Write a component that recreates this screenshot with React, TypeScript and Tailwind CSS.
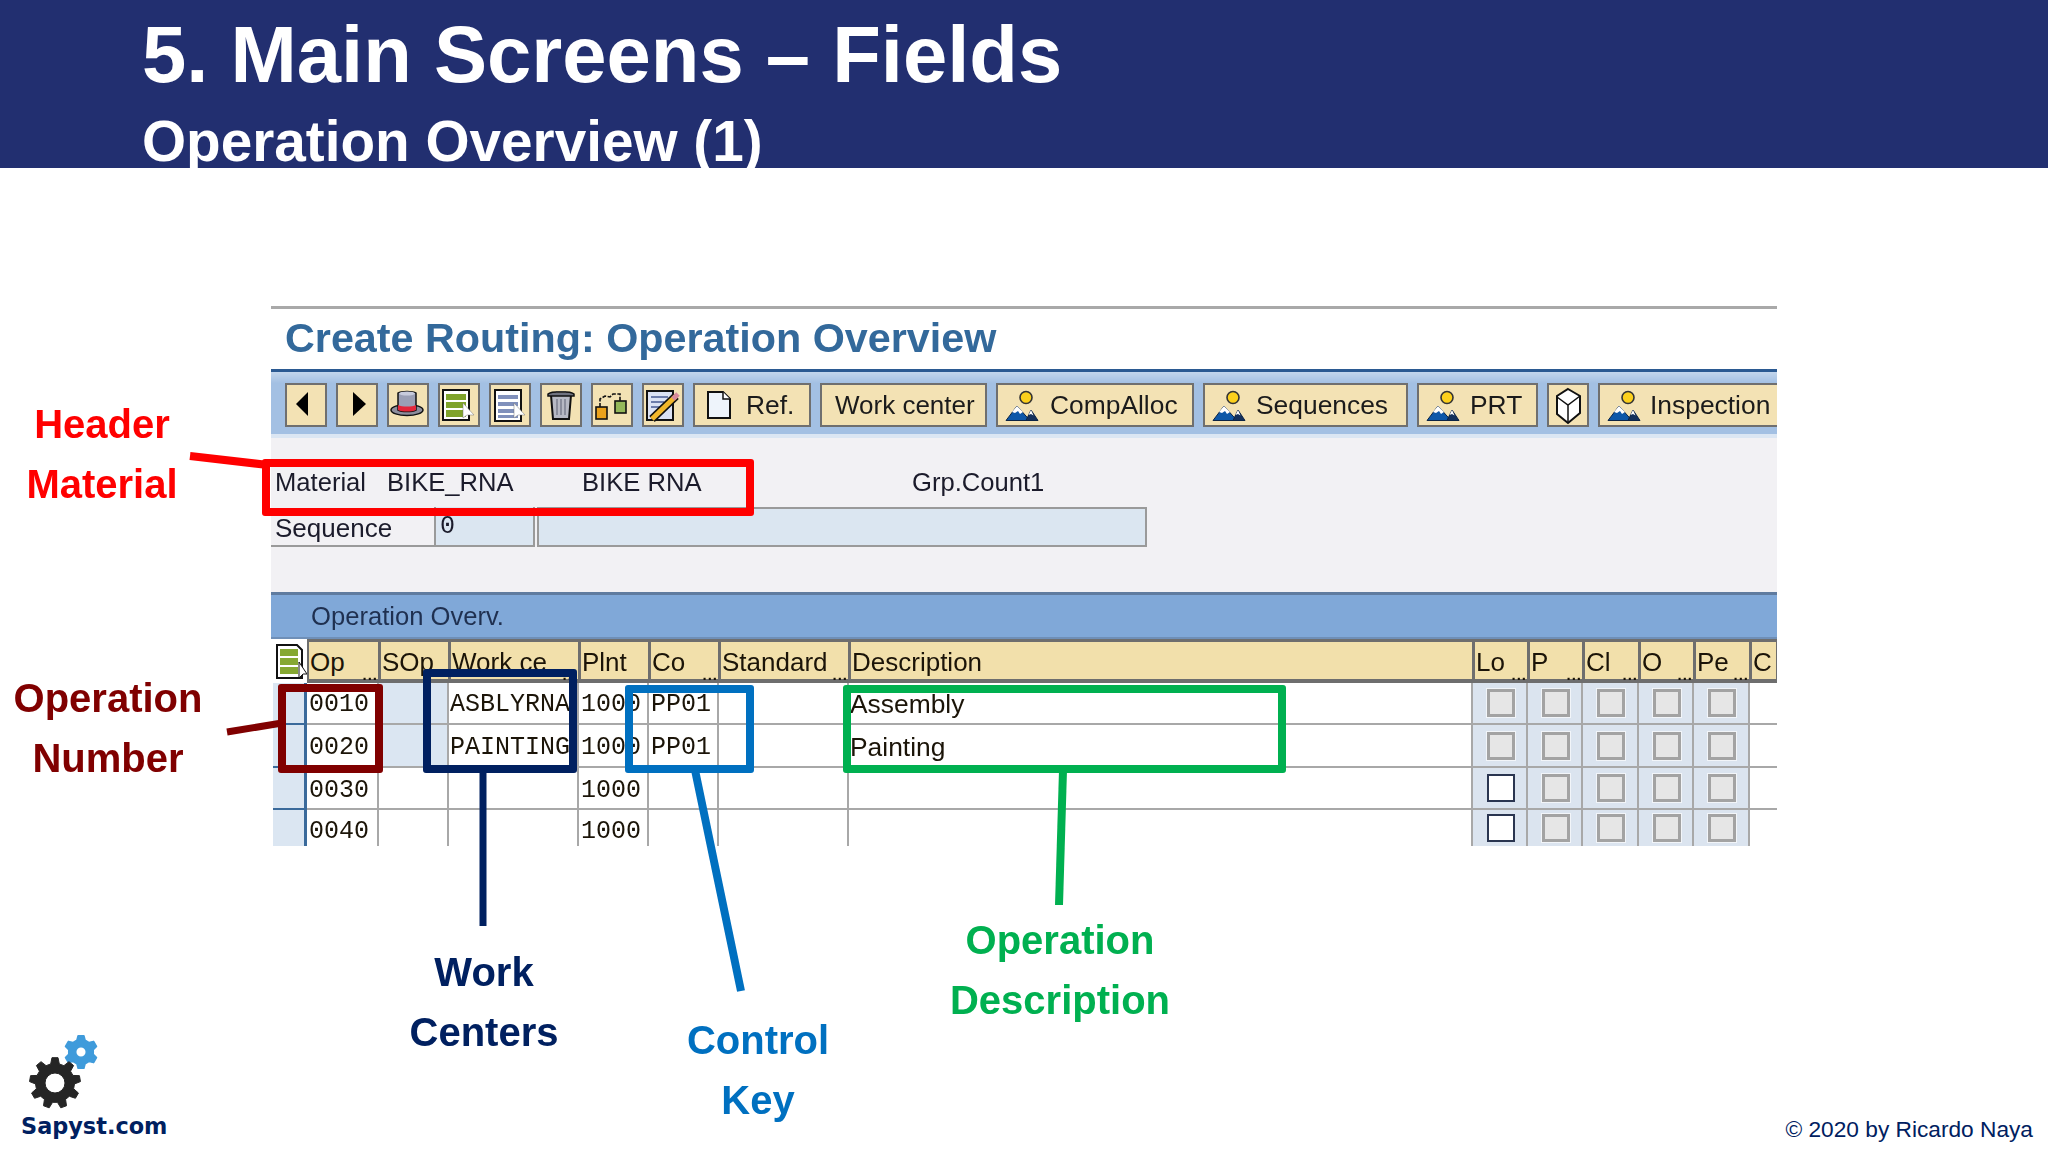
import type { ReactNode } from 'react'

const TABLE_COLS =
  'grid-cols-[36px_72px_70px_130px_70px_70px_130px_624px_55px_55px_56px_55px_56px_27px]'

function gearPath(cx: number, cy: number, outer: number, root: number, hole: number, teeth: number) {
  const pts: string[] = []
  const step = (Math.PI * 2) / teeth
  for (let i = 0; i < teeth; i++) {
    const a = i * step - Math.PI / 2
    const corners: [number, number][] = [
      [root, a - step * 0.32],
      [outer, a - step * 0.17],
      [outer, a + step * 0.17],
      [root, a + step * 0.32],
    ]
    corners.forEach(([r, t]) => {
      pts.push(`${(cx + r * Math.cos(t)).toFixed(2)} ${(cy + r * Math.sin(t)).toFixed(2)}`)
    })
  }
  const ring = `M${cx - hole} ${cy}a${hole} ${hole} 0 1 0 ${hole * 2} 0a${hole} ${hole} 0 1 0 ${-hole * 2} 0Z`
  return `M${pts.join('L')}Z${ring}`
}

function Logo() {
  return (
    <div className="flex flex-col items-start">
      <svg className="ml-px" width="90" height="78" viewBox="0 0 90 78">
        <path
          d={gearPath(59, 19, 16.5, 12.5, 5.3, 6)}
          fill="#3f9bdb"
          fillRule="evenodd"
          stroke="#3f9bdb"
          strokeWidth="1.5"
          strokeLinejoin="round"
        />
        <path
          d={gearPath(33, 50, 25.5, 19.5, 10, 9)}
          fill="#252525"
          fillRule="evenodd"
          stroke="#252525"
          strokeWidth="1"
          strokeLinejoin="round"
        />
      </svg>
      <span className="mt-px font-['DejaVu_Sans',sans-serif] text-[22.4px] leading-[28px] font-bold text-[#002060]">
        Sapyst.com
      </span>
    </div>
  )
}

function IconSvg({ children, w = 38, h = 40 }: { children: ReactNode; w?: number; h?: number }) {
  return (
    <svg className="shrink-0" width={w} height={h} viewBox={`0 0 ${w} ${h}`}>
      {children}
    </svg>
  )
}

const BackIcon = () => (
  <IconSvg>
    <polygon points="9,19 21,7 21,31" fill="#000" />
  </IconSvg>
)

const ForwardIcon = () => (
  <IconSvg>
    <polygon points="15,7 28,19 15,31" fill="#000" />
  </IconSvg>
)

const HatIcon = () => (
  <IconSvg>
    <ellipse cx="18" cy="25" rx="16" ry="5.5" fill="#8d8d9c" stroke="#111" strokeWidth="1.5" />
    <path d="M9 8c3-2 15-2 18 0v17c-4 2-14 2-18 0Z" fill="#9a9fb5" stroke="#111" strokeWidth="1.5" />
    <ellipse cx="18" cy="8.5" rx="8" ry="2" fill="#c7cbdc" />
    <path d="M9 20c4 2 14 2 18 0v5c-4 2-14 2-18 0Z" fill="#e3263a" />
  </IconSvg>
)

const Pointer = () => <polygon points="23,18 23,33 27,30 34,30" fill="#fff" stroke="#777" strokeWidth="0.5" />

const GreenListIcon = () => (
  <IconSvg>
    <rect x="3" y="5" width="26" height="30" fill="#fff" stroke="#111" strokeWidth="2" />
    <rect x="6" y="9" width="20" height="6" fill="#7fa32b" />
    <rect x="6" y="17" width="20" height="6" fill="#7fa32b" />
    <rect x="6" y="25" width="20" height="7" fill="#7fa32b" />
    <Pointer />
  </IconSvg>
)

const BlueListIcon = () => (
  <IconSvg>
    <rect x="4" y="5" width="26" height="31" fill="#fff" stroke="#111" strokeWidth="2" />
    <rect x="7" y="10" width="20" height="4" fill="#8090bb" />
    <rect x="7" y="17" width="20" height="4" fill="#8090bb" />
    <rect x="7" y="24" width="20" height="4" fill="#8090bb" />
    <rect x="7" y="30" width="20" height="3" fill="#8090bb" />
    <Pointer />
  </IconSvg>
)

const TrashIcon = () => (
  <IconSvg>
    <path d="M9 10h20l-2 24H11Z" fill="#b7b9c4" stroke="#111" strokeWidth="2" />
    <path d="M6 9c3-3 23-3 26 0v2H6Z" fill="#6f7280" stroke="#111" strokeWidth="1.5" />
    <rect x="14" y="6" width="10" height="2" fill="#333" />
    <path d="M15 14v16M19 14v16M23 14v16" stroke="#7c7f8e" strokeWidth="1.5" />
  </IconSvg>
)

const HierarchyIcon = () => (
  <IconSvg>
    <path d="M7 22v-8l5-3 5 1 3-3h7v7" fill="none" stroke="#111" strokeWidth="1.6" strokeDasharray="4 1.5" />
    <rect x="3" y="22" width="11" height="12" fill="#eba21c" stroke="#111" strokeWidth="1.6" />
    <rect x="22" y="16" width="11" height="12" fill="#94b85a" stroke="#111" strokeWidth="1.6" />
  </IconSvg>
)

const NoteIcon = () => (
  <IconSvg>
    <rect x="3" y="6" width="26" height="29" fill="#dbe2f4" stroke="#111" strokeWidth="2" />
    <path d="M7 12h17M7 17h13M7 22h9" stroke="#6c7cab" strokeWidth="2" />
    <path d="M8 34 32 11" stroke="#111" strokeWidth="8" />
    <path d="M8 34 32 11" stroke="#f2b72c" strokeWidth="5" />
    <path d="M29 14 34 9" stroke="#d88a9a" strokeWidth="5" />
  </IconSvg>
)

const PageIcon = () => (
  <IconSvg w={24} h={28}>
    <path d="M1 1h15l7 7v19H1Z" fill="#eef4fb" stroke="#111" strokeWidth="2" />
    <path d="M16 1v7h7" fill="#fff" stroke="#111" strokeWidth="1.5" />
  </IconSvg>
)

const PersonIcon = () => (
  <IconSvg w={34} h={31}>
    <circle cx="21" cy="7.5" r="6" fill="#fcd01c" stroke="#333" strokeWidth="1.6" />
    <polygon points="1,30.5 12,16 25,30.5" fill="#0d57a8" stroke="#0b2344" strokeWidth="1" />
    <polygon points="12,16 7,22 10,23 13,21 15,24 18,22" fill="#fff" />
    <polygon points="21,30.5 26,20 33,30.5" fill="#12305c" stroke="#0b2344" strokeWidth="1" />
    <polygon points="26,20 23.5,25 26,24 28.5,25.5" fill="#fff" />
  </IconSvg>
)

const CubeIcon = () => (
  <IconSvg>
    <path d="M19 4 31 11v17l-12 10-11-9V11Z" fill="#fff" stroke="#111" strokeWidth="2" />
    <path d="M8 12 19 20 31 11M19 20v17" fill="none" stroke="#111" strokeWidth="1.5" />
  </IconSvg>
)

function ToolButton({ className, children }: { className: string; children: ReactNode }) {
  return (
    <div
      className={`flex h-[44px] shrink-0 items-center overflow-hidden border-2 border-[#6f6f6f] bg-[#f3e2b4] text-[26.4px] leading-[32px] text-[#1b1b1b] ${className}`}
    >
      {children}
    </div>
  )
}

function Toolbar() {
  const plain = [
    <BackIcon key="back" />,
    <ForwardIcon key="forward" />,
    <HatIcon key="hat" />,
    <GreenListIcon key="green" />,
    <BlueListIcon key="blue" />,
    <TrashIcon key="trash" />,
    <HierarchyIcon key="hierarchy" />,
    <NoteIcon key="note" />,
  ]
  return (
    <div className="flex h-[62px] gap-[9px] overflow-hidden bg-linear-to-b from-[#c3d6ec] to-[#a3c0e3] to-[18%] pt-[11px] pl-[14px]">
      {plain.map((icon, i) => (
        <ToolButton key={i} className="w-[42px] justify-center">
          {icon}
        </ToolButton>
      ))}
      <ToolButton className="w-[118px] pl-[12px]">
        <PageIcon />
        <span className="ml-[15px]">Ref.</span>
      </ToolButton>
      <ToolButton className="w-[167px] pl-[13px] text-[26px]">Work center</ToolButton>
      <ToolButton className="w-[198px] pl-[7px]">
        <PersonIcon />
        <span className="ml-[11px]">CompAlloc</span>
      </ToolButton>
      <ToolButton className="w-[205px] pl-[7px]">
        <PersonIcon />
        <span className="ml-[10px]">Sequences</span>
      </ToolButton>
      <ToolButton className="w-[121px] pl-[7px]">
        <PersonIcon />
        <span className="ml-[10px]">PRT</span>
      </ToolButton>
      <ToolButton className="w-[42px] justify-center">
        <CubeIcon />
      </ToolButton>
      <ToolButton className="w-[190px] pl-[7px]">
        <PersonIcon />
        <span className="ml-[9px]">Inspection</span>
      </ToolButton>
    </div>
  )
}

function HeaderFields() {
  return (
    <div className="flex h-[154px] flex-col bg-[#f2f1f4] text-[#1b1b2b]">
      <div className="flex h-[69px] items-end pb-[10px] pl-[4px] text-[25.6px] leading-[30px]">
        <span className="w-[112px]">Material</span>
        <span className="w-[195px]">BIKE_RNA</span>
        <span className="w-[330px]">BIKE RNA</span>
        <span>Grp.Count1</span>
      </div>
      <div className="flex h-[40px] text-[26px]">
        <span className="w-[163px] border-b-2 border-[#9a9a9a] pt-[4px] pl-[4px] leading-[34px]">Sequence</span>
        <span className="w-[101px] border-2 border-t-0 border-[#9a9a9a] bg-[#dbe6f1] pt-[6px] pl-[4px] font-['Liberation_Mono',monospace] text-[25px] leading-[28px]">
          0
        </span>
        <span className="ml-[2px] w-[610px] border-2 border-[#9a9a9a] bg-[#dbe6f1]" />
      </div>
    </div>
  )
}

const headerCells = [
  { label: 'Op', more: true },
  { label: 'SOp', more: false },
  { label: 'Work ce', more: true },
  { label: 'Plnt', more: false },
  { label: 'Co', more: true },
  { label: 'Standard', more: true },
  { label: 'Description', more: false },
  { label: 'Lo', more: true },
  { label: 'P', more: true },
  { label: 'Cl', more: true },
  { label: 'O', more: true },
  { label: 'Pe', more: true },
  { label: 'C', more: false },
]

function TableCornerIcon() {
  return (
    <svg width="32" height="36" viewBox="0 0 32 36">
      <path d="M2 1h20l5 5v28H2Z" fill="#fff" stroke="#111" strokeWidth="2" />
      <rect x="5" y="5" width="18" height="7" fill="#86a832" />
      <rect x="5" y="14" width="18" height="7" fill="#86a832" />
      <rect x="5" y="23" width="18" height="7" fill="#86a832" />
      <polygon points="24,18 24,34 28,30 32,30" fill="#fff" stroke="#111" strokeWidth="1" />
    </svg>
  )
}

function TableHeader() {
  return (
    <div className={`grid h-[44px] ${TABLE_COLS} bg-[#6e6e6e]`}>
      <div className="flex justify-center bg-white pt-[5px] pl-[3px]">
        <TableCornerIcon />
      </div>
      {headerCells.map((cell) => (
        <div
          key={cell.label}
          className="relative mt-[3px] mr-px mb-[5px] ml-[2px] bg-[#f2e0ab] pt-[3px] pl-px text-[26px] leading-[34px] whitespace-nowrap text-[#1b1408]"
        >
          {cell.label}
          {cell.more && (
            <span className="absolute right-0 bottom-[-3px] text-[15px] leading-[14px] font-bold tracking-[1px]">
              ...
            </span>
          )}
        </div>
      ))}
    </div>
  )
}

function CheckBox({ active }: { active: boolean }) {
  return active ? (
    <span className="h-[28px] w-[28px] border-2 border-[#2a3550] bg-white" />
  ) : (
    <span className="h-[28px] w-[28px] border-[3px] border-[#a3a3a3] bg-[#e6e6e6] outline-1 outline-[#f2f5f9]" />
  )
}

const rows = [
  { op: '0010', wc: 'ASBLYRNA', plant: '1000', key: 'PP01', desc: 'Assembly', filled: true, height: 'h-[42px]', pad: 'pt-[4px]' },
  { op: '0020', wc: 'PAINTING', plant: '1000', key: 'PP01', desc: 'Painting', filled: true, height: 'h-[43px]', pad: 'pt-[4px]' },
  { op: '0030', wc: '', plant: '1000', key: '', desc: '', filled: false, height: 'h-[42px]', pad: 'pt-[5px]' },
  { op: '0040', wc: '', plant: '1000', key: '', desc: '', filled: false, height: 'h-[36px]', pad: 'pt-[8px]' },
]

function TableRow({ row, last }: { row: (typeof rows)[number]; last: boolean }) {
  const line = last ? '' : 'border-b-2 border-[#a8a8a8]'
  const cell = `flex items-center overflow-hidden border-r-2 border-r-[#a8a8a8] ${line}`
  const mono = `${row.pad} font-['Liberation_Mono',monospace] text-[25px] whitespace-nowrap text-[#1b1408]`
  return (
    <div className={`grid ${row.height} ${TABLE_COLS} bg-white`}>
      <div className={`ml-[2px] border-r-[3px] border-[#3a6a9b] bg-[#dbe6f2] ${last ? '' : 'border-b-2'}`} />
      <div className={`${cell} ${mono} pl-[2px]`}>{row.op}</div>
      <div className={`${cell} ${row.filled ? 'bg-[#dbe6f2]' : ''}`} />
      <div className={`${cell} ${mono} pl-px`}>{row.wc}</div>
      <div className={`${cell} ${mono} pl-[2px]`}>{row.plant}</div>
      <div className={`${cell} ${mono} pl-[2px]`}>{row.key}</div>
      <div className={cell} />
      <div className={`${cell} ${row.pad} pl-[1px] text-[26.4px] text-[#1b1408]`}>{row.desc}</div>
      {[0, 1, 2, 3, 4].map((i) => (
        <div key={i} className={`${cell} justify-center bg-[#dbe4ef] pl-[2px]`}>
          <CheckBox active={i === 0 && !row.filled} />
        </div>
      ))}
      <div className={line} />
    </div>
  )
}

function SapWindow() {
  return (
    <div className="mt-[138px] ml-[271px] w-[1506px] blur-[0.4px]">
      <div className="h-[63px] border-t-[3px] border-[#a9a9a9] pt-[5px] pl-[14px] text-[41.3px] leading-[48px] font-bold text-[#33699b]">
        Create Routing: Operation Overview
      </div>
      <div className="h-[3px] bg-[#2b5a92]" />
      <Toolbar />
      <div className="h-[4px] bg-[#dbe6f3]" />
      <HeaderFields />
      <div className="h-[47px] border-t-[3px] border-b-2 border-t-[#5f7b9f] border-b-[#6f8fb7] bg-[#80a8d8] pl-[40px] text-[25.6px] leading-[42px] text-[#1f3050]">
        Operation Overv.
      </div>
      <TableHeader />
      {rows.map((row, i) => (
        <TableRow key={row.op} row={row} last={i === rows.length - 1} />
      ))}
    </div>
  )
}

function Callouts() {
  return (
    <>
      <svg className="absolute inset-0" width="2048" height="1152" viewBox="0 0 2048 1152">
        <line x1="190" y1="456" x2="268" y2="465" stroke="#ff0000" strokeWidth="8" />
        <line x1="227" y1="732" x2="282" y2="723" stroke="#800000" strokeWidth="7" />
        <line x1="483" y1="770" x2="483" y2="926" stroke="#002060" strokeWidth="7" />
        <line x1="695" y1="770" x2="741" y2="991" stroke="#0070c0" strokeWidth="8" />
        <line x1="1063" y1="770" x2="1059" y2="905" stroke="#00b050" strokeWidth="8" />
      </svg>
      <div className="absolute top-[459px] left-[262px] h-[57px] w-[492px] rounded-[3px] border-[8px] border-[#ff0000]" />
      <div className="absolute top-[684px] left-[278px] h-[89px] w-[105px] rounded-[3px] border-[8px] border-[#800000]" />
      <div className="absolute top-[669px] left-[423px] h-[104px] w-[154px] rounded-[3px] border-[8px] border-[#002060]" />
      <div className="absolute top-[685px] left-[625px] h-[88px] w-[129px] rounded-[3px] border-[8px] border-[#0070c0]" />
      <div className="absolute top-[685px] left-[843px] h-[88px] w-[443px] rounded-[3px] border-[8px] border-[#00b050]" />

      <div className="absolute top-[394px] left-[2px] w-[200px] text-center text-[40px] leading-[60px] font-bold text-[#ff0000]">
        Header
        <br />
        Material
      </div>
      <div className="absolute top-[668px] left-[8px] w-[200px] text-center text-[40px] leading-[60px] font-bold text-[#800000]">
        Operation
        <br />
        Number
      </div>
      <div className="absolute top-[942px] left-[384px] w-[200px] text-center text-[40px] leading-[60px] font-bold text-[#002060]">
        Work
        <br />
        Centers
      </div>
      <div className="absolute top-[1010px] left-[658px] w-[200px] text-center text-[40px] leading-[60px] font-bold text-[#0070c0]">
        Control
        <br />
        Key
      </div>
      <div className="absolute top-[910px] left-[940px] w-[240px] text-center text-[40px] leading-[60px] font-bold text-[#00b050]">
        Operation
        <br />
        Description
      </div>
    </>
  )
}

export default function App() {
  return (
    <div className="relative flex h-[1152px] w-[2048px] flex-col overflow-hidden bg-white font-['Liberation_Sans',sans-serif]">
      <header className="h-[168px] shrink-0 bg-[#222f70] pl-[142px] font-bold whitespace-nowrap text-white">
        <h1 className="pt-[10px] text-[79.6px] leading-[90px]">5. Main Screens – Fields</h1>
        <h2 className="mt-[10px] text-[56.7px] leading-[64px]">Operation Overview (1)</h2>
      </header>

      <SapWindow />

      <footer className="mt-auto flex items-end justify-between pr-[15px] pb-[12px] pl-[21px]">
        <Logo />
        <span className="mb-[-3px] text-[22.7px] leading-[28px] text-[#002060]">© 2020 by Ricardo Naya</span>
      </footer>

      <Callouts />
    </div>
  )
}
